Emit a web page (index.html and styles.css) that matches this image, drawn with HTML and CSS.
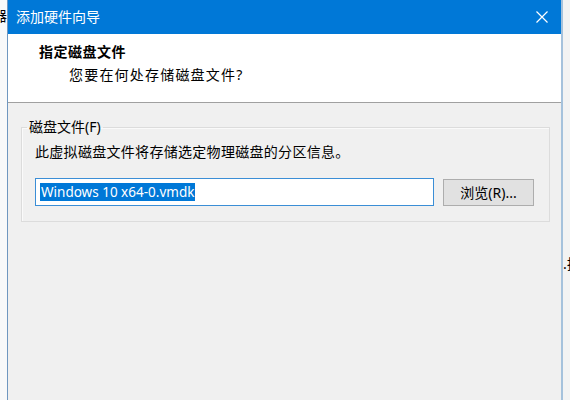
FILE: index.html
```html
<!DOCTYPE html>
<html lang="zh-CN">
<head>
	<meta charset="UTF-8">
	<title>添加硬件向导</title>
	<link rel="stylesheet" href="styles.css">
</head>
<body>
	<div class="edge edge-left">
		<span class="peek">器</span>
	</div>
	<section class="window">
		<div class="titlebar">
			<span class="title">添加硬件向导</span>
			<a href="#" class="close">
				<svg width="12" height="12" viewBox="0 0 12 12">
					<path d="M0.5 0.5 L11.5 11.5 M11.5 0.5 L0.5 11.5" stroke="#fff" stroke-width="1.2" fill="none"/>
				</svg>
			</a>
		</div>
		<div class="header">
			<h1 class="head-title">指定磁盘文件</h1>
			<p class="head-sub">您要在何处存储磁盘文件?</p>
		</div>
		<div class="body">
			<fieldset class="group">
				<legend>磁盘文件(F)</legend>
				<p class="desc">此虚拟磁盘文件将存储选定物理磁盘的分区信息。</p>
				<div class="row">
					<div class="field"><span class="sel">Windows 10 x64-0.vmdk</span></div>
					<a href="#" class="btn">浏览(R)...</a>
				</div>
			</fieldset>
		</div>
	</section>
	<div class="edge edge-right">
		<span class="peek">.拉</span>
	</div>
</body>
</html>
```

FILE: styles.css
```css
* {
	padding: 0;
	margin: 0;
	box-sizing: border-box;
}
a {
	text-decoration: none;
	color: #000;
}
body {
	width: 570px;
	height: 400px;
	overflow: hidden;
	display: flex;
	background: #fff;
	font-family: "Noto Sans", "Noto Sans CJK SC", sans-serif;
	font-size: 14px;
	color: #000;
}
.edge {
	width: 7px;
	height: 400px;
	overflow: hidden;
	background: #f8f9fa;
}
.edge-left .peek {
	display: block;
	margin: 7px 0 0 -7px;
	line-height: 18px;
	white-space: nowrap;
}
.edge-right {
	flex: 1;
	background: #f3f3f3;
}
.edge-right .peek {
	display: block;
	margin: 255px 0 0 0;
	line-height: 18px;
	white-space: nowrap;
}
.window {
	width: 556px;
	height: 400px;
	display: flex;
	flex-direction: column;
	background: #f0f0f0;
	border-left: 1px solid #6f97c0;
	border-right: 2px solid #a6c2dc;
}
.titlebar {
	height: 34px;
	background: #0078d7;
	display: flex;
	align-items: center;
	justify-content: space-between;
	padding: 0 13px 0 8px;
	color: #fff;
}
.title {
	font-size: 14px;
	line-height: 20px;
}
.close {
	display: flex;
	width: 12px;
	height: 12px;
}
.header {
	height: 69px;
	background: #fff;
	border-bottom: 1px solid #a0a0a0;
	padding: 8px 0 0 31px;
}
.head-title {
	font-size: 14px;
	font-weight: bold;
	line-height: 20px;
	letter-spacing: 0.5px;
}
.head-sub {
	margin: 3px 0 0 30px;
	line-height: 20px;
	letter-spacing: 1.2px;
}
.body {
	flex: 1;
	padding: 15px 11px 0 13px;
}
.group {
	border: 1px solid #dcdcdc;
	box-shadow: inset 1px 1px 0 #fafafa;
	padding: 6px 15px 15px 13px;
}
.group legend {
	margin-left: -8px;
	padding: 0 2px;
	line-height: 18px;
}
.desc {
	line-height: 20px;
	letter-spacing: 0.3px;
}
.row {
	display: flex;
	align-items: flex-end;
	gap: 9px;
	margin-top: 16px;
}
.field {
	width: 399px;
	height: 28px;
	background: #fff;
	border: 1px solid #3b8ed6;
	padding: 3px 0 0 4px;
	line-height: 20px;
}
.sel {
	background: #0078d7;
	color: #fff;
	padding: 0 1px;
	font-size: 13.5px;
}
.btn {
	width: 91px;
	height: 27px;
	background: #e1e1e1;
	border: 1px solid #adadad;
	display: flex;
	align-items: center;
	justify-content: center;
	line-height: 20px;
}
```
